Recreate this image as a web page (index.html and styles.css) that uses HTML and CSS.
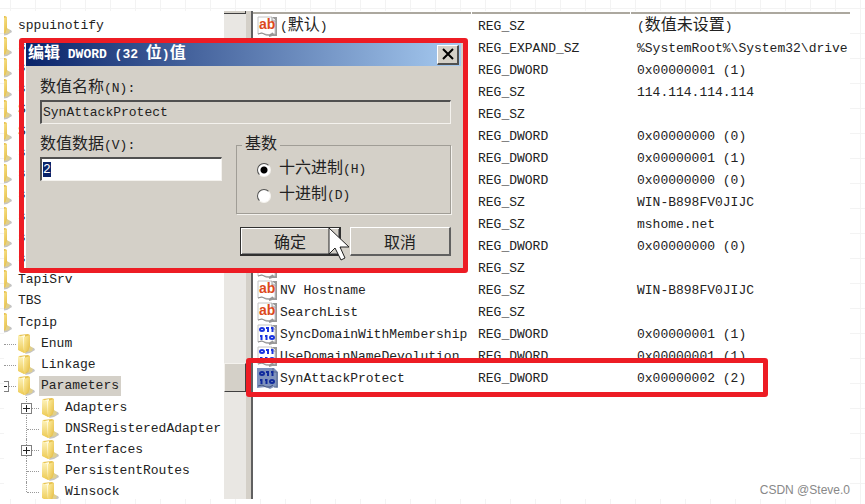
FILE: index.html
```html
<!DOCTYPE html>
<html lang="zh-CN">
<head>
  <meta charset="UTF-8">
  <meta name="viewport" content="width=device-width, initial-scale=1.0">
  <title>注册表编辑器</title>
  <link rel="stylesheet" href="styles.css">
</head>
<body>
  <svg width="0" height="0" class="symbols" aria-hidden="true">
    <defs>
      <linearGradient id="front" x1="0" y1="0" x2="1" y2="1">
        <stop offset="0" stop-color="#fff0a6"/>
        <stop offset="1" stop-color="#e3b93c"/>
      </linearGradient>
      <linearGradient id="cover" x1="0" y1="0" x2="0" y2="1">
        <stop offset="0" stop-color="#fdf3bd"/>
        <stop offset="1" stop-color="#edca52"/>
      </linearGradient>
    </defs>
    <symbol id="folder" viewBox="0 0 18 20">
      <path d="M12 13l5 1 1 2-5 3-5 1z" fill="#c4c4c4"/>
      <path d="M2 1l9-1 2 1v15l-5 3-6-3z" fill="#e6c14d"/>
      <path d="M4 2l4-1v15l-4 1z" fill="#fffbe0"/>
      <path d="M7 3l6-2v14l-6 4z" fill="url(#front)"/>
      <path d="M1 1l5 2 1 16-6-3z" fill="url(#cover)"/>
      <path d="M13 12l3 2-1 3-4 1z" fill="#e0cf8c"/>
    </symbol>
    <symbol id="page" viewBox="0 0 21 21">
      <path d="M16 2h3v17h-4l-3 1" fill="none" stroke="#999" stroke-width="2"/>
      <path d="M1 1h14l3 4v13l-3-1-3 2-4-1-4-1-3 1z" fill="#fff" stroke="#c4c4c4"/>
      <path d="M15 1v4h4" fill="#eee" stroke="#999"/>
      <path d="M1 18l4-1 4 2h4l3-2" fill="none" stroke="#8a8a8a"/>
    </symbol>
    <symbol id="bits" viewBox="0 0 21 21">
      <g fill="none" stroke="currentColor" stroke-width="2">
        <ellipse cx="5" cy="5.500" rx="2" ry="1.500"/>
        <path d="M11 3v5M15.500 3v5M4.500 11v5M9.500 11v5M9 4h2M14 4h2M3 12h2M8 12h2"/>
        <ellipse cx="15" cy="13.500" rx="2" ry="1.500"/>
      </g>
    </symbol>
    <symbol id="string" viewBox="0 0 21 21">
      <use href="#page"/>
      <text x="2" y="13" class="icon-ab">ab</text>
    </symbol>
    <symbol id="binary" viewBox="0 0 21 21">
      <use href="#page"/>
      <use href="#bits"/>
    </symbol>
    <symbol id="binary-selected" viewBox="0 0 21 21">
      <path d="M0 0h17l4 4v16l-4-1-4 2-4-2-9 1z" fill="#7f92bd"/>
      <path d="M16 0v4h4v15h-3" fill="none" stroke="#5b6a8c"/>
      <path d="M1 18l4-1 4 2h4l3-2" fill="none" stroke="#45547c"/>
      <use href="#bits"/>
    </symbol>
  </svg>

  <main class="regedit">
    <ul class="tree">
      <li class="top"><svg class="folder"><use href="#folder"/></svg><span>sppuinotify</span></li>
      <li class="top"><svg class="folder"><use href="#folder"/></svg><span>s</span></li>
      <li class="top"><svg class="folder"><use href="#folder"/></svg><span>s</span></li>
      <li class="top"><svg class="folder"><use href="#folder"/></svg><span>s</span></li>
      <li class="top"><svg class="folder"><use href="#folder"/></svg><span>S</span></li>
      <li class="top"><svg class="folder"><use href="#folder"/></svg><span>S</span></li>
      <li class="top"><svg class="folder"><use href="#folder"/></svg><span>s</span></li>
      <li class="top"><svg class="folder"><use href="#folder"/></svg><span>s</span></li>
      <li class="top"><svg class="folder"><use href="#folder"/></svg><span>s</span></li>
      <li class="top"><svg class="folder"><use href="#folder"/></svg><span>s</span></li>
      <li class="top"><svg class="folder"><use href="#folder"/></svg><span>s</span></li>
      <li class="top"><svg class="folder"><use href="#folder"/></svg><span>s</span></li>
      <li class="top"><svg class="folder"><use href="#folder"/></svg><span>TapiSrv</span></li>
      <li class="top"><svg class="folder"><use href="#folder"/></svg><span>TBS</span></li>
      <li class="top"><svg class="folder"><use href="#folder"/></svg><span>Tcpip</span></li>
      <li class="key"><i class="branch"></i><svg class="folder"><use href="#folder"/></svg><span>Enum</span></li>
      <li class="key"><i class="branch"></i><svg class="folder"><use href="#folder"/></svg><span>Linkage</span></li>
      <li class="key selected"><i class="branch"></i><i class="toggle open"></i><svg class="folder"><use href="#folder"/></svg><span>Parameters</span></li>
      <li class="subkey"><i class="branch"></i><i class="toggle"></i><svg class="folder"><use href="#folder"/></svg><span>Adapters</span></li>
      <li class="subkey"><i class="branch"></i><svg class="folder"><use href="#folder"/></svg><span>DNSRegisteredAdapter</span></li>
      <li class="subkey"><i class="branch"></i><i class="toggle"></i><svg class="folder"><use href="#folder"/></svg><span>Interfaces</span></li>
      <li class="subkey"><i class="branch"></i><svg class="folder"><use href="#folder"/></svg><span>PersistentRoutes</span></li>
      <li class="subkey last"><i class="branch"></i><svg class="folder"><use href="#folder"/></svg><span>Winsock</span></li>
    </ul>

    <div class="scrollbar">
      <div class="arrow-up"></div>
      <div class="thumb"></div>
    </div>
    <div class="splitter"></div>

    <section class="values">
      <div class="header"><i></i><i></i><i></i></div>
      <table>
        <colgroup><col class="col-name"><col class="col-type"><col></colgroup>
        <tbody>
          <tr><td><svg class="icon"><use href="#string"/></svg>(<span class="cn">默认</span>)</td><td>REG_SZ</td><td>(<span class="cn">数值未设置</span>)</td></tr>
          <tr><td><svg class="icon"><use href="#string"/></svg></td><td>REG_EXPAND_SZ</td><td>%SystemRoot%\System32\drive</td></tr>
          <tr><td></td><td>REG_DWORD</td><td>0x00000001 (1)</td></tr>
          <tr><td></td><td>REG_SZ</td><td>114.114.114.114</td></tr>
          <tr><td></td><td>REG_SZ</td><td></td></tr>
          <tr><td></td><td>REG_DWORD</td><td>0x00000000 (0)</td></tr>
          <tr><td></td><td>REG_DWORD</td><td>0x00000001 (1)</td></tr>
          <tr><td></td><td>REG_DWORD</td><td>0x00000000 (0)</td></tr>
          <tr><td></td><td>REG_SZ</td><td>WIN-B898FV0JIJC</td></tr>
          <tr><td></td><td>REG_SZ</td><td>mshome.net</td></tr>
          <tr><td></td><td>REG_DWORD</td><td>0x00000000 (0)</td></tr>
          <tr><td><svg class="icon"><use href="#string"/></svg></td><td>REG_SZ</td><td></td></tr>
          <tr><td><svg class="icon"><use href="#string"/></svg>NV Hostname</td><td>REG_SZ</td><td>WIN-B898FV0JIJC</td></tr>
          <tr><td><svg class="icon"><use href="#string"/></svg>SearchList</td><td>REG_SZ</td><td></td></tr>
          <tr><td><svg class="icon"><use href="#binary"/></svg>SyncDomainWithMembership</td><td>REG_DWORD</td><td>0x00000001 (1)</td></tr>
          <tr><td><svg class="icon"><use href="#binary"/></svg>UseDomainNameDevolution</td><td>REG_DWORD</td><td>0x00000001 (1)</td></tr>
          <tr class="selected"><td><svg class="icon"><use href="#binary-selected"/></svg>SynAttackProtect</td><td>REG_DWORD</td><td>0x00000002 (2)</td></tr>
        </tbody>
      </table>
    </section>
  </main>

  <div class="mark mark-row"></div>

  <div class="mark mark-dialog">
    <form class="dialog" role="dialog" aria-labelledby="dialog-title">
      <div class="titlebar">
        <h1 id="dialog-title"><span class="cn">编辑</span> DWORD (32 <span class="cn">位</span>)<span class="cn">值</span></h1>
        <button type="button" class="close" aria-label="关闭">
          <svg viewBox="0 0 14 14"><path d="M2 2l10 10M12 2L2 12"/></svg>
        </button>
      </div>

      <div class="dialog-body">
        <label for="value-name"><span class="cn">数值名称</span>(N):</label>
        <input type="text" id="value-name" class="field readonly" value="SynAttackProtect" readonly>

        <div class="columns">
          <div class="data">
            <label for="value-data"><span class="cn">数值数据</span>(V):</label>
            <input type="text" id="value-data" class="field" value="2">
          </div>
          <fieldset>
            <legend><span class="cn">基数</span></legend>
            <label class="radio"><input type="radio" name="base" checked><span><span class="cn">十六进制</span>(H)</span></label>
            <label class="radio"><input type="radio" name="base"><span><span class="cn">十进制</span>(D)</span></label>
          </fieldset>
        </div>

        <div class="actions">
          <button type="button" class="btn default">确定</button>
          <button type="button" class="btn">取消</button>
        </div>
      </div>
    </form>
    <svg class="cursor" viewBox="0 0 22 34"><path d="M1 1v26l6-6 6 12 4-2-5-11h9z"/></svg>
  </div>

  <div class="watermark">CSDN @Steve.0</div>

  <script>
    // the value is selected as soon as the dialog opens
    const valueData = document.getElementById('value-data');
    valueData.focus();
    valueData.select();
  </script>
</body>
</html>
```
FILE: styles.css
```css
* {
  box-sizing: border-box;
}

body {
  margin: 0;
  padding: 11px 15px 5px 4px;
  height: 100vh;
  display: flex;
  position: relative;
  overflow: hidden;
  font-family: "Liberation Mono", "Noto Sans CJK SC", monospace;
  font-size: 13px;
  color: #222;
  background-color: #fff;
  background-image:
    linear-gradient(90deg, #f3f3f3 1px, transparent 1px),
    linear-gradient(#f3f3f3 1px, transparent 1px);
  background-size: 25px 25px;
  background-position: 10px 8px;
}

.symbols {
  position: absolute;
}

.cn {
  font-family: "Noto Sans CJK SC", sans-serif;
  font-size: 16px;
  line-height: 16px;
}

.icon-ab {
  font: bold 14px "Liberation Sans", sans-serif;
  fill: #dc4a1c;
}

.regedit {
  flex: 1;
  display: flex;
  min-width: 0;
  background: #fff;
  overflow: hidden;
}

/* tree */

.tree {
  width: 220px;
  margin: 0 0 -4px;
  padding: 4px 0 0;
  display: flex;
  flex-direction: column;
  list-style: none;
  overflow: hidden;
}

.tree li {
  flex: 1;
  min-height: 0;
  display: flex;
  align-items: center;
  position: relative;
  white-space: nowrap;
}

.tree span {
  padding: 0 2px;
  line-height: 20px;
}

.folder {
  width: 18px;
  height: 20px;
  flex: none;
  margin-right: 4px;
}

.top .folder {
  margin-left: -10px;
}

.key {
  padding-left: 13px;
}

.subkey {
  padding-left: 37px;
}

.tree .selected span {
  background: #d4d0c8;
}

.branch {
  position: absolute;
  left: 0;
  top: 50%;
  width: 12px;
  border-top: 1px dotted #999;
}

.subkey .branch {
  left: 23px;
}

.subkey::before {
  content: "";
  position: absolute;
  left: 22px;
  top: 0;
  height: 100%;
  border-left: 1px dotted #999;
}

.subkey.last::before {
  height: 50%;
}

.toggle {
  position: absolute;
  left: 17px;
  top: calc(50% - 5px);
  width: 11px;
  height: 11px;
  border: 1px solid #808080;
  background:
    linear-gradient(#222, #222) center / 7px 1px no-repeat,
    linear-gradient(#222, #222) center / 1px 7px no-repeat,
    #fff;
}

.toggle.open {
  left: -6px;
  background: linear-gradient(#222, #222) center / 7px 1px no-repeat, #fff;
}

/* scrollbar */

.scrollbar {
  width: 22px;
  display: flex;
  flex-direction: column;
  background: #e9e7e3;
}

.arrow-up {
  height: 3px;
  background: #d4d0c8;
  border-bottom: 1px solid #404040;
  border-right: 1px solid #404040;
}

.thumb {
  height: 29px;
  margin-top: 349px;
  background: #d4d0c8;
  border: 1px solid #f4f2ee;
  border-right-color: #404040;
  border-bottom-color: #404040;
}

.splitter {
  width: 7px;
  background: #d4d0c8;
  border-right: 2px solid #606060;
}

/* value list */

.values {
  flex: 1;
  min-width: 0;
  overflow: hidden;
}

.header {
  display: grid;
  grid-template-columns: 218px 158px 1fr;
  gap: 1px;
  height: 4px;
  padding: 1px 0;
}

.header i {
  background: #aca89f;
}

.values table {
  width: 100%;
  table-layout: fixed;
  border-collapse: collapse;
}

.col-name {
  width: 219px;
}

.col-type {
  width: 159px;
}

.values td {
  height: 22px;
  padding: 0 0 0 6px;
  line-height: 22px;
  white-space: nowrap;
  overflow: hidden;
}

.values td:first-child {
  padding-left: 4px;
}

.icon {
  width: 21px;
  height: 21px;
  margin-right: 2px;
  vertical-align: middle;
  color: #1a35e0;
}

.values .selected .icon {
  color: #102a9c;
}

/* red highlight frames */

.mark {
  position: absolute;
  border: 5px solid #ed1c24;
  border-radius: 3px;
}

.mark-row {
  left: 246px;
  top: 358px;
  width: 522px;
  height: 39px;
}

.mark-dialog {
  left: 19px;
  top: 38px;
  width: 449px;
  padding-left: 2px;
}

/* dialog */

.dialog {
  background: #d4d0c8;
}

.titlebar {
  display: flex;
  align-items: center;
  justify-content: space-between;
  height: 23px;
  margin-right: 2px;
  padding: 0 2px;
  background: linear-gradient(90deg, #0a246a, #a6caf0);
  color: #fff;
}

.titlebar h1 {
  margin: 0;
  font-size: 13px;
  line-height: 22px;
}

.close {
  width: 22px;
  height: 20px;
  padding: 0;
  display: flex;
  align-items: center;
  justify-content: center;
  background: #d4d0c8;
  border: 1px solid #fff;
  border-right: 2px solid #505050;
  border-bottom: 2px solid #505050;
}

.close svg {
  width: 14px;
  height: 14px;
  stroke: #000;
  stroke-width: 2;
}

.dialog-body {
  padding: 11px 12px 12px 14px;
}

.dialog-body label {
  display: block;
  line-height: 22px;
}

.field {
  display: block;
  width: 100%;
  height: 24px;
  padding: 0 1px;
  border: 1px solid #f4f2ee;
  border-top: 2px solid #505050;
  border-left: 2px solid #505050;
  background: #fff;
  font-family: inherit;
  font-size: 13px;
  color: #222;
  outline: none;
}

.field.readonly {
  background: #d4d0c8;
}

.field::selection {
  background: #0a246a;
  color: #fff;
}

.columns {
  display: flex;
  gap: 14px;
  margin-top: 10px;
}

.data {
  width: 182px;
}

fieldset {
  flex: 1;
  margin: 0;
  padding: 1px 20px 4px;
  border: 1px solid #a09d96;
  box-shadow: 1px 1px 0 #f4f2ee;
}

legend {
  margin-left: -15px;
  padding: 0 3px;
  line-height: 20px;
}

.dialog-body .radio {
  display: flex;
  align-items: center;
  gap: 8px;
  line-height: 26px;
}

.radio input {
  appearance: none;
  width: 14px;
  height: 14px;
  margin: 0;
  border: 1px solid #505050;
  border-right-color: #f4f2ee;
  border-bottom-color: #f4f2ee;
  border-radius: 50%;
  background: #fff;
}

.radio input:checked {
  background: radial-gradient(circle, #000 3px, #fff 4px);
}

.actions {
  display: flex;
  justify-content: flex-end;
  gap: 9px;
  margin-top: 13px;
}

.btn {
  width: 101px;
  height: 29px;
  padding: 0;
  background: #d4d0c8;
  border: 1px solid #fff;
  border-right: 2px solid #606060;
  border-bottom: 2px solid #606060;
  font-family: "Noto Sans CJK SC", sans-serif;
  font-size: 16px;
  line-height: 24px;
  color: #222;
}

.btn.default {
  border: 1px solid #303030;
  border-right-width: 2px;
  border-bottom-width: 2px;
  box-shadow: inset 1px 1px 0 #fff, inset -1px -1px 0 #808080;
}

.cursor {
  position: absolute;
  left: 304px;
  top: 184px;
  width: 22px;
  height: 34px;
  fill: #fff;
  stroke: #222;
}

.watermark {
  position: absolute;
  right: 15px;
  bottom: 6px;
  font-family: "Liberation Sans", sans-serif;
  font-size: 12px;
  line-height: 16px;
  color: #888;
}
```
